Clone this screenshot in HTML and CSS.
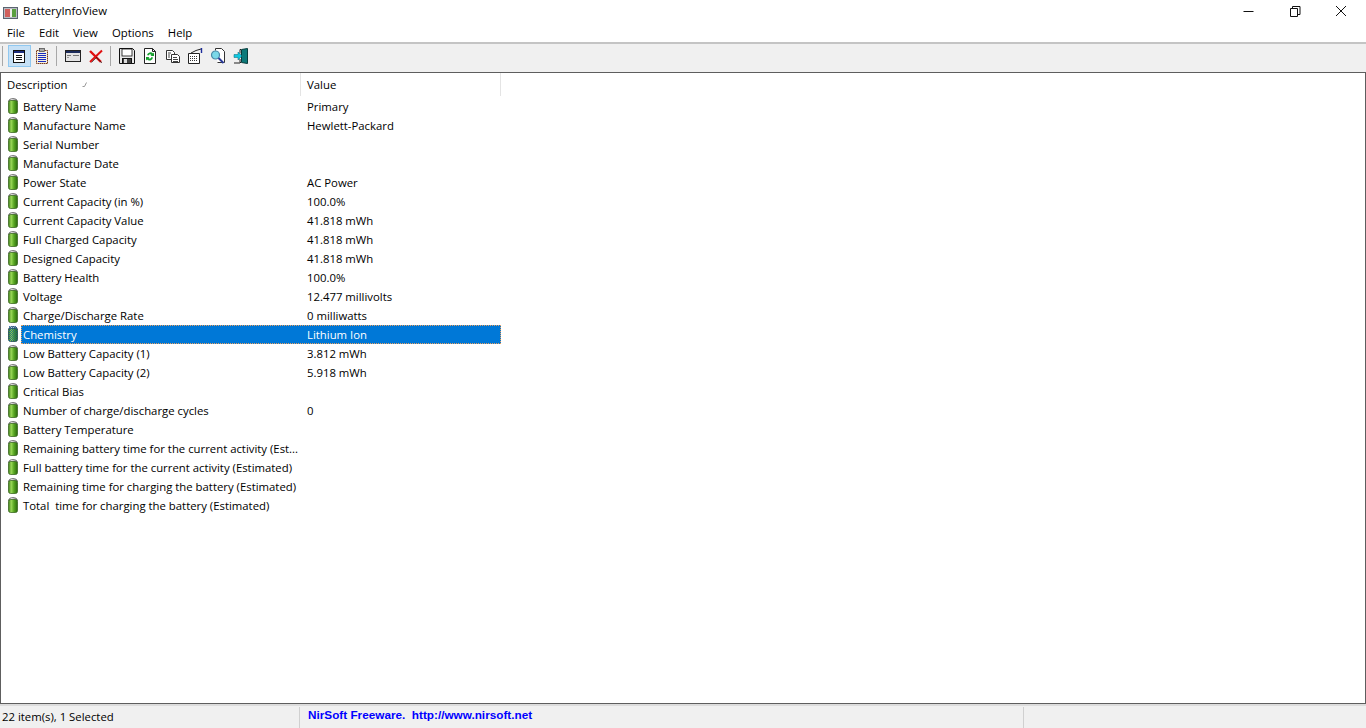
FILE: index.html
```html
<!DOCTYPE html>
<html lang="en">
<head>
<meta charset="utf-8">
<title>BatteryInfoView</title>
<link rel="stylesheet" href="styles.css">
</head>
<body>
<svg class="defs" width="0" height="0" aria-hidden="true">
  <defs>
    <linearGradient id="batt" x1="0" x2="1" y1="0" y2="0">
      <stop offset="0" stop-color="#3c7a18"/>
      <stop offset=".3" stop-color="#9ad858"/>
      <stop offset=".6" stop-color="#58a622"/>
      <stop offset="1" stop-color="#2a680c"/>
    </linearGradient>
    <linearGradient id="cap" x1="0" x2="1" y1="0" y2="0">
      <stop offset="0" stop-color="#8a8a8a"/>
      <stop offset=".35" stop-color="#e8e8e8"/>
      <stop offset="1" stop-color="#777"/>
    </linearGradient>
    <symbol id="battery" viewBox="0 0 12 17">
      <path d="M1.500 4.500C1.500 .5 10.500 .5 10.500 4.500z" fill="url(#cap)" stroke="#666" stroke-width=".8"/>
      <rect x="1.500" y="3.500" width="9" height="13" rx="2" fill="url(#batt)" stroke="#3c6a22" stroke-width=".8"/>
    </symbol>
    <symbol id="battery-sel" viewBox="0 0 12 17">
      <path d="M1.500 4.500C1.500 .5 10.500 .5 10.500 4.500z" fill="url(#cap)" stroke="#345" stroke-width=".8"/>
      <rect x="1.500" y="3.500" width="9" height="13" rx="2" fill="url(#batt)" stroke="#1c4a50" stroke-width=".8"/>
      <path d="M2 1.500h8M3 2.500h7M2 3.500h8M3 4.500h7M2 5.500h8M3 6.500h7M2 7.500h8M3 8.500h7M2 9.500h8M3 10.500h7M2 11.500h8M3 12.500h7M2 13.500h8M3 14.500h7M2 15.500h8" stroke="#0a5a9c" stroke-dasharray="1 1" opacity=".75"/>
    </symbol>
  </defs>
</svg>
<div class="window">
  <header class="titlebar">
    <svg class="app-icon" viewBox="0 0 16 16" width="16" height="16">
      <rect x="1.500" y="3.500" width="14" height="11" fill="#b8bcc4" stroke="#5a6470"/>
      <rect x="3" y="5" width="5" height="8" fill="#d0605c"/>
      <rect x="8" y="5" width="2" height="8" fill="#eee"/>
      <rect x="10" y="5" width="4" height="8" fill="#5aa040"/>
    </svg>
    <span class="title">BatteryInfoView</span>
    <div class="win-buttons">
      <svg class="win-btn" viewBox="0 0 46 22"><path d="M15.500 10.500h10" stroke="#111" fill="none"/></svg>
      <svg class="win-btn" viewBox="0 0 46 22"><path d="M16.500 7.500h7v8h-7zM18.500 7.500v-2h7.500v8h-2.500" stroke="#111" fill="none"/></svg>
      <svg class="win-btn" viewBox="0 0 46 22"><path d="M16 5l10 10M26 5l-10 10" stroke="#111" fill="none"/></svg>
    </div>
  </header>
  <nav class="menubar">
    <span class="menu-item">File</span>
    <span class="menu-item">Edit</span>
    <span class="menu-item">View</span>
    <span class="menu-item">Options</span>
    <span class="menu-item">Help</span>
  </nav>
  <div class="toolbar">
    <span class="tb-sep"></span>
    <span class="tb-btn active">
      <svg viewBox="0 0 16 16" width="16" height="16"><rect x="2.500" y="2.500" width="11" height="12" fill="#fff" stroke="#111"/><rect x="3" y="3" width="10" height="2" fill="#1c2c7c"/><path d="M5 7.500h6M5 9.500h6M5 11.500h6" stroke="#111"/></svg>
    </span>
    <span class="tb-btn">
      <svg viewBox="0 0 16 16" width="16" height="16"><rect x="2.500" y="2.500" width="11" height="13" fill="#f4f0e0" stroke="#7a3a18" stroke-dasharray="1.500 .5"/><rect x="5.500" y=".5" width="5" height="3" fill="#aaa" stroke="#444" stroke-width=".7"/><path d="M4 5.500h8M4 7.500h8M4 9.500h8M4 11.500h8M4 13.500h8" stroke="#1a2ac0"/></svg>
    </span>
    <span class="tb-sep"></span>
    <span class="tb-btn">
      <svg viewBox="0 0 16 16" width="16" height="16"><rect x=".5" y="2.500" width="15" height="11" fill="#e4e4e4" stroke="#222"/><rect x="1" y="3" width="14" height="2" fill="#1c2c5c"/><path d="M2 7.500h4M8 7.500h6" stroke="#777"/><path d="M2 9.500h2" stroke="#999"/></svg>
    </span>
    <span class="tb-btn">
      <svg viewBox="0 0 16 16" width="16" height="16"><path d="M2 3l11 11" stroke="#e01010" stroke-width="2.400"/><path d="M14 2.500L2 14" stroke="#e01010" stroke-width="2"/><path d="M8 9l6 6M3.500 14.500l5-5" stroke="#222" stroke-width=".7"/></svg>
    </span>
    <span class="tb-sep"></span>
    <span class="tb-btn">
      <svg viewBox="0 0 16 16" width="16" height="16"><path d="M.5.500h13l2 2v13H.5z" fill="#e8e8e8" stroke="#111"/><rect x="3" y="1" width="10" height="7" fill="#fff" stroke="#111" stroke-width=".8"/><rect x="3.500" y="10.500" width="9" height="5" fill="#444" stroke="#111"/><rect x="5" y="11" width="3" height="4" fill="#ddd"/></svg>
    </span>
    <span class="tb-btn">
      <svg viewBox="0 0 16 16" width="16" height="16"><path d="M2.500.500h8l3 3v12h-11z" fill="#fff" stroke="#222"/><path d="M10.500.5v3h3" fill="none" stroke="#222"/><path d="M5 7a3.500 3.500 0 0 1 6-1.500l1-1v3.500H8.500l1-1A2 2 0 0 0 6.500 7.500zM11 9.500a3.500 3.500 0 0 1-6 2l-1 1V9h3.500l-1 1A2 2 0 0 0 9.500 9z" fill="#14a02c"/></svg>
    </span>
    <span class="tb-btn">
      <svg viewBox="0 0 16 16" width="16" height="16"><path d="M1.500 2.500h6l2 2v7h-8z" fill="#fff" stroke="#333"/><path d="M6.500 6.500h6l2 2v6h-8z" fill="#fff" stroke="#333"/><path d="M3 5h3M3 7h2M3 9h2M8 9.500h4M8 11.500h5M8 13.500h5" stroke="#444"/></svg>
    </span>
    <span class="tb-btn">
      <svg viewBox="0 0 16 16" width="16" height="16"><path d="M1.500 5.500h11v10h-11z" fill="#fff" stroke="#222"/><path d="M3 8.500h8M3 10.500h8M3 12.500h8" stroke="#333" stroke-dasharray="1 1"/><path d="M4 5L9 2.500l5-1.500" stroke="#222" fill="none"/><path d="M14.500 0v5" stroke="#1c2c9c" stroke-width="1.400"/></svg>
    </span>
    <span class="tb-btn">
      <svg viewBox="0 0 16 16" width="16" height="16"><path d="M5.500 2.500v-2h6l3 3v11h-7" fill="#fff" stroke="#333"/><circle cx="5.500" cy="7" r="4" fill="#7ad8e8" stroke="#4a8aa8" stroke-width="1.200"/><path d="M8.500 10l5 5" stroke="#2a3a9a" stroke-width="2"/></svg>
    </span>
    <span class="tb-btn">
      <svg viewBox="0 0 16 16" width="16" height="16"><path d="M8.500 1.500l6-1v15l-6-1z" fill="#0d7a7a" stroke="#083c3c"/><path d="M8 1.500h-1v4M7 11v3.500h1" fill="none" stroke="#222"/><path d="M1 6.500h4V4l4 4-4 4V9.500H1z" fill="#10c8e0" stroke="#067" stroke-width=".5"/><rect x="1" y="14.500" width="6" height="1" fill="#222"/></svg>
    </span>
  </div>
  <main class="list">
    <div class="list-head">
      <div class="col-desc head-cell">Description<svg class="sort" viewBox="0 0 6 6" width="6" height="6"><path d="M4.500 .5L2.500 4.500H.5" fill="none" stroke="#999"/></svg></div>
      <div class="col-value head-cell">Value</div>
    </div>
    <div class="row"><svg class="batt"><use href="#battery"/></svg><span class="c1">Battery Name</span><span class="c2">Primary</span></div>
    <div class="row"><svg class="batt"><use href="#battery"/></svg><span class="c1">Manufacture Name</span><span class="c2">Hewlett-Packard</span></div>
    <div class="row"><svg class="batt"><use href="#battery"/></svg><span class="c1">Serial Number</span><span class="c2"></span></div>
    <div class="row"><svg class="batt"><use href="#battery"/></svg><span class="c1">Manufacture Date</span><span class="c2"></span></div>
    <div class="row"><svg class="batt"><use href="#battery"/></svg><span class="c1">Power State</span><span class="c2">AC Power</span></div>
    <div class="row"><svg class="batt"><use href="#battery"/></svg><span class="c1">Current Capacity (in %)</span><span class="c2">100.0%</span></div>
    <div class="row"><svg class="batt"><use href="#battery"/></svg><span class="c1">Current Capacity Value</span><span class="c2">41.818 mWh</span></div>
    <div class="row"><svg class="batt"><use href="#battery"/></svg><span class="c1">Full Charged Capacity</span><span class="c2">41.818 mWh</span></div>
    <div class="row"><svg class="batt"><use href="#battery"/></svg><span class="c1">Designed Capacity</span><span class="c2">41.818 mWh</span></div>
    <div class="row"><svg class="batt"><use href="#battery"/></svg><span class="c1">Battery Health</span><span class="c2">100.0%</span></div>
    <div class="row"><svg class="batt"><use href="#battery"/></svg><span class="c1">Voltage</span><span class="c2">12.477 millivolts</span></div>
    <div class="row"><svg class="batt"><use href="#battery"/></svg><span class="c1">Charge/Discharge Rate</span><span class="c2">0 milliwatts</span></div>
    <div class="row selected"><svg class="batt"><use href="#battery-sel"/></svg><div class="sel-band"><span class="c1">Chemistry</span><span class="c2">Lithium Ion</span></div></div>
    <div class="row"><svg class="batt"><use href="#battery"/></svg><span class="c1">Low Battery Capacity (1)</span><span class="c2">3.812 mWh</span></div>
    <div class="row"><svg class="batt"><use href="#battery"/></svg><span class="c1">Low Battery Capacity (2)</span><span class="c2">5.918 mWh</span></div>
    <div class="row"><svg class="batt"><use href="#battery"/></svg><span class="c1">Critical Bias</span><span class="c2"></span></div>
    <div class="row"><svg class="batt"><use href="#battery"/></svg><span class="c1">Number of charge/discharge cycles</span><span class="c2">0</span></div>
    <div class="row"><svg class="batt"><use href="#battery"/></svg><span class="c1">Battery Temperature</span><span class="c2"></span></div>
    <div class="row"><svg class="batt"><use href="#battery"/></svg><span class="c1">Remaining battery time for the current activity (Est...</span><span class="c2"></span></div>
    <div class="row"><svg class="batt"><use href="#battery"/></svg><span class="c1">Full battery time for the current activity (Estimated)</span><span class="c2"></span></div>
    <div class="row"><svg class="batt"><use href="#battery"/></svg><span class="c1">Remaining time for charging the battery (Estimated)</span><span class="c2"></span></div>
    <div class="row"><svg class="batt"><use href="#battery"/></svg><span class="c1">Total  time for charging the battery (Estimated)</span><span class="c2"></span></div>
  </main>
  <footer class="statusbar">
    <div class="st-1">22 item(s), 1 Selected</div>
    <div class="st-2">NirSoft Freeware.&nbsp; http://www.nirsoft.net</div>
    <div class="st-3"></div>
  </footer>
</div>
</body>
</html>
```
FILE: styles.css
```css
* { box-sizing: border-box; }
html, body { margin: 0; height: 100%; }
body {
  font-family: "Open Sans", "Noto Sans", sans-serif;
  font-size: 11.35px;
  color: #000;
  background: #fff;
  overflow: hidden;
}
.defs { position: absolute; }
.window { display: flex; flex-direction: column; height: 728px; }

.titlebar { height: 23px; display: flex; align-items: center; padding-left: 2px; flex: none; }
.title { padding-bottom: 2px; }
.app-icon { margin-right: 5px; flex: none; }
.win-buttons { margin-left: auto; display: flex; }
.win-btn { width: 46px; height: 22px; display: block; }

.menubar { height: 19px; display: flex; align-items: center; flex: none; }
.menu-item { padding: 0 7px; }

.toolbar {
  height: 30px;
  flex: none;
  display: flex;
  align-items: flex-start;
  padding-top: 1px;
  background: #f0f0f0;
  border-top: 2px solid #c4c4c4;
}
.tb-sep { width: 1px; height: 20px; background: #a8a8a8; margin: 1px 5px 0 2.6px; flex: none; }
.tb-sep:first-child { margin-left: 2px; }
.tb-btn { width: 22.7px; height: 22px; display: flex; align-items: center; justify-content: center; flex: none; border: 1px solid transparent; }
.tb-btn.active { background: #c6e0f5; border-color: #90c8f0; }

.list {
  flex: 1;
  min-height: 0;
  border: 1px solid #5e5e5e;
  background: #fff;
}
.list-head { display: flex; height: 24px; }
.head-cell { display: flex; align-items: center; padding-left: 6px; border-right: 1px solid #e4e4e4; height: 23px; }
.col-desc { width: 300px; }
.col-value { width: 200px; }
.sort { margin-left: 14px; margin-top: 1px; }

.row { display: flex; align-items: center; height: 19px; white-space: pre; }
.batt { width: 12px; height: 17px; margin: 0 4px 2px 6px; flex: none; }
.c1 { width: 278px; flex: none; padding-bottom: 1px; }
.c2 { padding-left: 6px; padding-bottom: 1px; }
.selected { color: #fff; }
.sel-band {
  display: flex;
  align-items: center;
  height: 19px;
  width: 480px;
  margin-left: -2px;
  padding-left: 2px;
  background: #0078d7;
  outline: 1px dotted #e8a060;
  outline-offset: -1px;
}

.statusbar {
  height: 24px;
  flex: none;
  display: flex;
  background: #f0f0f0;
  border-top: 2px solid #dcdcdc;
}
.st-1 { width: 300px; margin-top: 1px; padding: 2px 0 0 2px; border-right: 1px solid #d0d0d0; }
.st-2 {
  width: 724px;
  margin-top: 1px;
  padding: 1px 0 0 8px;
  font: bold 11.75px "Liberation Sans", Arial, sans-serif;
  color: #0000ff;
  border-right: 1px solid #d0d0d0;
}
.st-3 { flex: 1; }
```
